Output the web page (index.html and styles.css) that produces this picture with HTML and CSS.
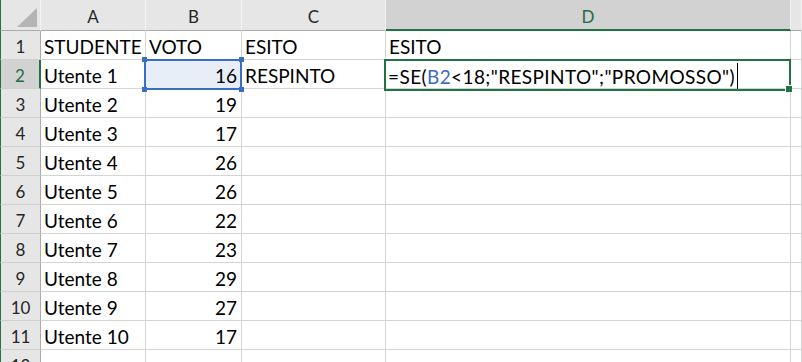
FILE: index.html
```html
<!DOCTYPE html>
<html lang="it">
<head>
<meta charset="utf-8">
<title>Foglio1</title>
<link rel="stylesheet" href="styles.css">
</head>
<body>
<div class="sheet">
  <!-- column headers -->
  <div class="corner">
    <svg width="20" height="19" viewBox="0 0 20 19"><polygon points="20,0 20,19 0,19" fill="#b4b4b4"/></svg>
  </div>
  <div class="colhead">A</div>
  <div class="colhead">B</div>
  <div class="colhead">C</div>
  <div class="colhead active">D</div>
  <div class="colhead"></div>

  <div class="rowhead">1</div>
  <div class="cell">STUDENTE</div>
  <div class="cell">VOTO</div>
  <div class="cell">ESITO</div>
  <div class="cell">ESITO</div>
  <div class="cell"></div>

  <div class="rowhead active">2</div>
  <div class="cell">Utente 1</div>
  <div class="cell num in-range">16</div>
  <div class="cell">RESPINTO</div>
  <div class="cell editing">=SE(<span class="ref">B2</span>&lt;18;"RESPINTO";"PROMOSSO")<span class="caret"></span></div>
  <div class="cell"></div>

  <div class="rowhead">3</div>
  <div class="cell">Utente 2</div>
  <div class="cell num">19</div>
  <div class="cell"></div>
  <div class="cell"></div>
  <div class="cell"></div>

  <div class="rowhead">4</div>
  <div class="cell">Utente 3</div>
  <div class="cell num">17</div>
  <div class="cell"></div>
  <div class="cell"></div>
  <div class="cell"></div>

  <div class="rowhead">5</div>
  <div class="cell">Utente 4</div>
  <div class="cell num">26</div>
  <div class="cell"></div>
  <div class="cell"></div>
  <div class="cell"></div>

  <div class="rowhead">6</div>
  <div class="cell">Utente 5</div>
  <div class="cell num">26</div>
  <div class="cell"></div>
  <div class="cell"></div>
  <div class="cell"></div>

  <div class="rowhead">7</div>
  <div class="cell">Utente 6</div>
  <div class="cell num">22</div>
  <div class="cell"></div>
  <div class="cell"></div>
  <div class="cell"></div>

  <div class="rowhead">8</div>
  <div class="cell">Utente 7</div>
  <div class="cell num">23</div>
  <div class="cell"></div>
  <div class="cell"></div>
  <div class="cell"></div>

  <div class="rowhead">9</div>
  <div class="cell">Utente 8</div>
  <div class="cell num">29</div>
  <div class="cell"></div>
  <div class="cell"></div>
  <div class="cell"></div>

  <div class="rowhead">10</div>
  <div class="cell">Utente 9</div>
  <div class="cell num">27</div>
  <div class="cell"></div>
  <div class="cell"></div>
  <div class="cell"></div>

  <div class="rowhead">11</div>
  <div class="cell">Utente 10</div>
  <div class="cell num">17</div>
  <div class="cell"></div>
  <div class="cell"></div>
  <div class="cell"></div>

  <div class="rowhead">12</div>
  <div class="cell"></div>
  <div class="cell"></div>
  <div class="cell"></div>
  <div class="cell"></div>
  <div class="cell"></div>

  <!-- range referenced by the formula -->
  <div class="ref-range">
    <span class="handle tl"></span>
    <span class="handle tr"></span>
    <span class="handle bl"></span>
    <span class="handle br"></span>
  </div>
  <!-- active cell -->
  <div class="active-cell"><span class="fill-handle"></span></div>
</div>
</body>
</html>
```

FILE: styles.css
```css
html, body {
  margin: 0;
  padding: 0;
  background: #ffffff;
  overflow: hidden;
}

.sheet {
  position: relative;
  display: grid;
  grid-template-columns: 41px 105px 96px 144px 405px 1fr;
  grid-template-rows: 31px repeat(12, 29px);
  width: 802px;
  height: 362px;
  overflow: hidden;
  font-family: Lato, "Noto Sans", sans-serif;
  color: #000;
}

.corner {
  box-sizing: border-box;
  background: #e6e6e6;
  border-left: 1px solid #217346;
  border-right: 1px solid #f4f4f4;
  border-bottom: 1px solid #ababab;
  display: flex;
  justify-content: flex-end;
  align-items: flex-end;
  padding: 0 3px 3px 0;
}

.colhead {
  box-sizing: border-box;
  background: #e6e6e6;
  border-right: 1px solid #f4f4f4;
  border-bottom: 1px solid #ababab;
  font-size: 17px;
  line-height: 30px;
  padding-top: 2px;
  text-align: center;
  color: #262626;
}

.colhead.active {
  background: #d2d2d2;
  color: #1e6b41;
  border-bottom: 2px solid #217346;
  line-height: 29px;
}

.rowhead {
  box-sizing: border-box;
  background: #e6e6e6;
  border-left: 1px solid #217346;
  border-right: 1px solid #ababab;
  border-bottom: 1px solid #d0d0d0;
  font-size: 17px;
  line-height: 25px;
  padding-top: 3px;
  text-align: center;
  color: #262626;
}

.rowhead.active {
  background: #d2d2d2;
  color: #1e6b41;
  border-right: 2px solid #217346;
}

.cell {
  box-sizing: border-box;
  border-right: 1px solid #d4d4d4;
  border-bottom: 1px solid #d4d4d4;
  font-size: 19px;
  line-height: 25px;
  padding: 3px 3px 0 3px;
  white-space: nowrap;
  overflow: visible;
}

.cell.num {
  text-align: right;
  padding-right: 4px;
}

.cell.in-range {
  background: #e8eef8;
}

.cell.editing {
  padding-left: 2px;
  letter-spacing: 0.4px;
}

.ref {
  color: #3b6cc0;
}

.caret {
  display: inline-block;
  width: 1px;
  height: 26px;
  margin-left: 2px;
  background: #000;
  vertical-align: -5px;
}

.ref-range {
  position: absolute;
  left: 144px;
  top: 59px;
  width: 98px;
  height: 31px;
  box-sizing: border-box;
  border: 2px solid #3a6ec2;
  pointer-events: none;
}

.handle {
  position: absolute;
  width: 5px;
  height: 5px;
  background: #3a6ec2;
}
.handle.tl { left: -4px; top: -4px; }
.handle.tr { right: -4px; top: -4px; }
.handle.bl { left: -4px; bottom: -4px; }
.handle.br { right: -4px; bottom: -4px; }

.active-cell {
  position: absolute;
  left: 384px;
  top: 59px;
  width: 407px;
  height: 32px;
  box-sizing: border-box;
  border: 2px solid #217346;
  pointer-events: none;
}

.fill-handle {
  position: absolute;
  right: -3px;
  bottom: -3px;
  width: 6px;
  height: 6px;
  background: #217346;
  border-left: 1px solid #fff;
  border-top: 1px solid #fff;
}
```
